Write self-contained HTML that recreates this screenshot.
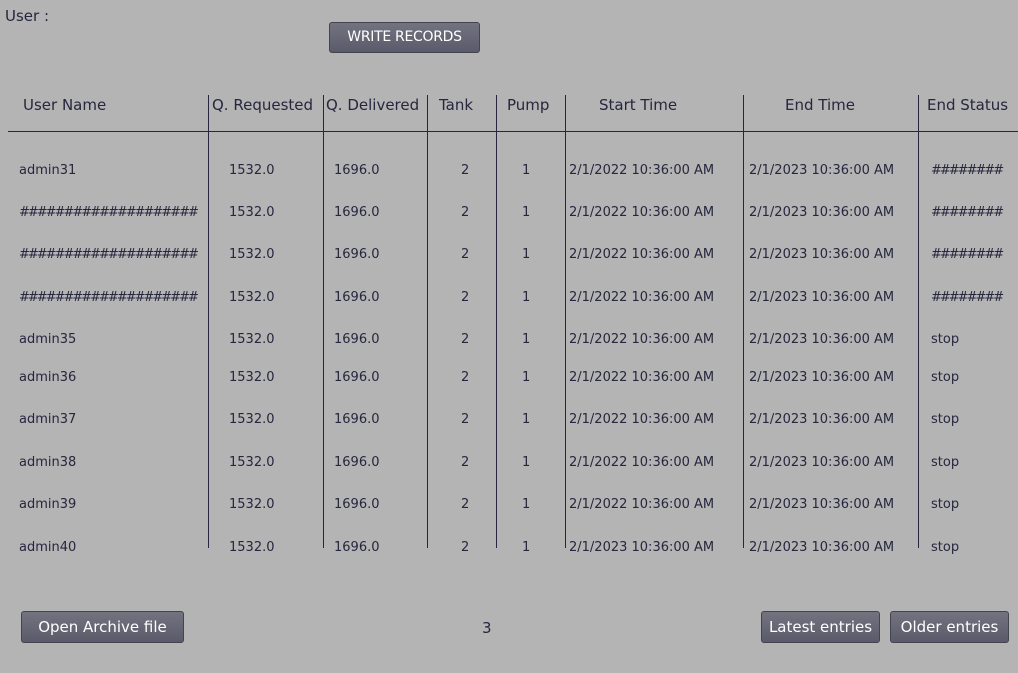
<!DOCTYPE html><html><head><style>
body{margin:0;width:1018px;height:673px;background:#b4b4b4;position:relative;overflow:hidden;font-family:"DejaVu Sans","Liberation Sans",sans-serif;color:#26263e}
.a{position:absolute;white-space:nowrap;line-height:16px}
.h{font-size:15px;top:97px}
.d{font-size:13px}
.x{letter-spacing:-2px}
.v{position:absolute;top:95px;height:453px;width:1px;background:#26263e}
.b{position:absolute;background:linear-gradient(#737380,#5a5a6a);border:1px solid #44444f;border-radius:3px;color:#fff;font-size:15px;text-align:center;box-sizing:border-box}
</style></head><body>
<div class="a" style="left:5px;top:8px;font-size:15px">User :</div>
<div class="b" style="left:329px;top:22px;width:151px;height:31px;line-height:29px;font-size:14px;letter-spacing:-0.3px">WRITE RECORDS</div>
<div class="a h" style="left:23px">User Name</div>
<div class="a h" style="left:212px">Q. Requested</div>
<div class="a h" style="left:326px">Q. Delivered</div>
<div class="a h" style="left:439px">Tank</div>
<div class="a h" style="left:507px">Pump</div>
<div class="a h" style="left:599px">Start Time</div>
<div class="a h" style="left:785px">End Time</div>
<div class="a h" style="left:927px">End Status</div>
<div style="position:absolute;left:8px;top:131px;width:1010px;height:1px;background:#26263e"></div>
<div class="v" style="left:208px"></div><div class="v" style="left:323px"></div><div class="v" style="left:427px"></div><div class="v" style="left:496px"></div><div class="v" style="left:565px"></div><div class="v" style="left:743px"></div><div class="v" style="left:918px"></div>
<div id="rows"></div>
<script>
var ys=[169,211,253,296,338,376,418,461,503,546];
var n=["admin31","####################","####################","####################","admin35","admin36","admin37","admin38","admin39","admin40"];
var h="";
ys.forEach(function(y,i){var t=y-6;
var s=i<4?"########":"stop";var st=i==9?"2/1/2023 10:36:00 AM":"2/1/2022 10:36:00 AM";
[[19,n[i]],[229,"1532.0"],[334,"1696.0"],[461,"2"],[522,"1"],[569,st],[749,"2/1/2023 10:36:00 AM"],[931,s]].forEach(function(c){
var cl=c[1].charAt(0)=="#"?"a d x":"a d";
h+='<div class="'+cl+'" style="left:'+c[0]+'px;top:'+t+'px">'+c[1]+'</div>';});});
document.getElementById("rows").innerHTML=h;
</script>
<div class="b" style="left:21px;top:611px;width:163px;height:32px;line-height:30px">Open Archive file</div>
<div class="a" style="left:482px;top:620px;font-size:15px">3</div>
<div class="b" style="left:761px;top:611px;width:119px;height:32px;line-height:30px">Latest entries</div>
<div class="b" style="left:890px;top:611px;width:119px;height:32px;line-height:30px">Older entries</div>
</body></html>
